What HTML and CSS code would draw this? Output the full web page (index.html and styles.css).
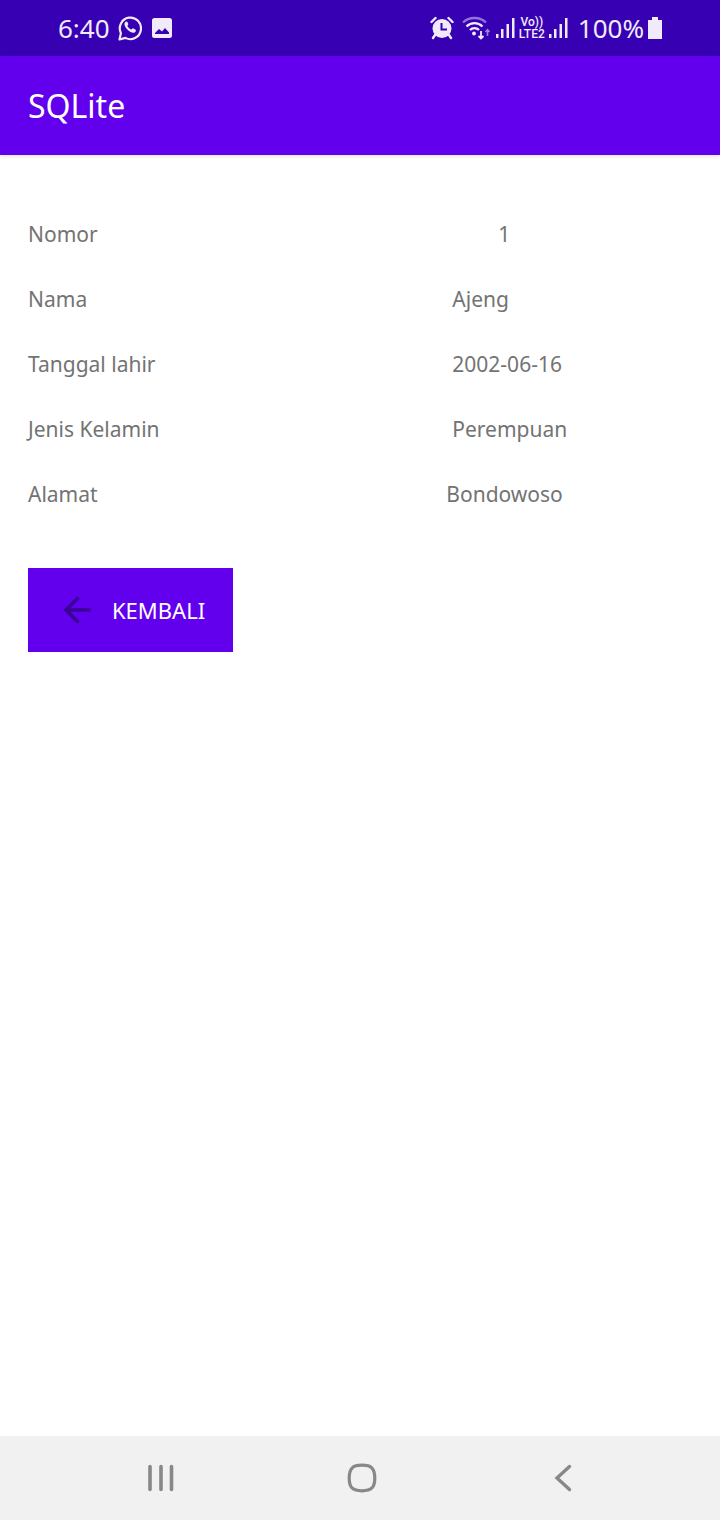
FILE: index.html
```html
<!DOCTYPE html>
<html lang="id">
<head>
<meta charset="utf-8">
<meta name="viewport" content="width=device-width, initial-scale=1">
<title>SQLite</title>
<link rel="stylesheet" href="styles.css">
</head>
<body>
<div class="screen">
  <div class="status">
    <div class="status-group">
      <span class="clock">6:40</span>
      <svg width="24" height="26" viewBox="0 0 24 26" fill="none" stroke="#f1eafb" stroke-width="2.200"><path d="M1.500 24.500l1.400-6.300A10.600 10.800 0 1 1 7.400 22.900z" stroke-linejoin="round"/><path d="M7.600 6.700c-2.200 1.600-1 5 2 8s6.600 4.200 8 1.800c.6-1.100.3-1.600-.6-2.200l-2-1c-.8-.3-1.200 1.500-2 1.200-1.700-.7-2.900-1.900-3.600-3.400-.3-.8 1.200-1.300.9-2.200L9.400 7c-.4-.7-1.200-.8-1.800-.3z" fill="#f1eafb" stroke="none"/></svg>
      <svg width="20" height="20" viewBox="0 0 20 20"><path fill="#f1eafb" fill-rule="evenodd" d="M2.500 0h15A2.500 2.500 0 0 1 20 2.500v15a2.500 2.500 0 0 1-2.500 2.500h-15A2.500 2.500 0 0 1 0 17.500v-15A2.500 2.500 0 0 1 2.500 0zM3 16h14v-1.500L13 10l-3 3.500-3-2.500-4 4z"/></svg>
    </div>
    <div class="status-group">
      <svg class="alarm" width="24" height="24" viewBox="0 0 24 24"><circle cx="12" cy="12.500" r="9.500" fill="#f1eafb"/><path d="M5 19l-2 3M19 19l2 3M1.500 6l4-4M22.500 6l-4-4" stroke="#f1eafb" stroke-width="2.400" stroke-linecap="round"/><path d="M11.500 7v6.500H17" fill="none" stroke="#3700b3" stroke-width="2"/></svg>
      <svg class="wifi" width="28" height="24" viewBox="0 0 28 24" fill="none" stroke="#f1eafb" stroke-width="2.300"><path d="M1 6.500c6-6 17-6 23 0" opacity=".5"/><path d="M4.500 10.500c4.500-4.500 11.500-4.500 16 0M8 14c2.500-2.500 6.500-2.500 9 0"/><circle cx="12" cy="17.500" r="1.900" fill="#f1eafb" stroke="none"/><path d="M19 15v7.500M16.500 20l2.500 2.500 2.500-2.500" stroke-width="1.800"/><path d="M25.500 20v-6.500M23.500 16l2-2.300 2 2.300" stroke-width="1.600" opacity=".55"/></svg>
      <svg class="signal" width="19" height="22" viewBox="0 0 19 22" fill="#f1eafb"><path d="M0 17h2.500v4H0zM5 12h2.500v9H5zM10.500 7H13v14h-2.500zM16 1h2.500v20H16z"/></svg>
      <span class="lte"><span>Vo))</span><span>LTE2</span></span>
      <svg class="signal" width="19" height="22" viewBox="0 0 19 22" fill="#f1eafb"><path d="M0 17h2.500v4H0zM5 12h2.500v9H5zM10.500 7H13v14h-2.500zM16 1h2.500v20H16z"/></svg>
      <span class="percent">100%</span>
      <svg width="14" height="22" viewBox="0 0 14 22" fill="#f1eafb"><path d="M4 0h6v3h4v19H0V3h4z"/></svg>
    </div>
  </div>
  <header class="appbar"><h1>SQLite</h1></header>
  <main class="content">
    <table class="details">
      <tr><th scope="row">Nomor</th><td class="number">1</td></tr>
      <tr><th scope="row">Nama</th><td>Ajeng</td></tr>
      <tr><th scope="row">Tanggal lahir</th><td>2002-06-16</td></tr>
      <tr><th scope="row">Jenis Kelamin</th><td>Perempuan</td></tr>
      <tr><th scope="row">Alamat</th><td class="address">Bondowoso</td></tr>
    </table>
    <button class="back" type="button">
      <svg width="28" height="28" viewBox="0 0 28 28" fill="none" stroke="#3a0096" stroke-width="3.500"><path d="M27.500 14H3M15.500 1.500L3 14l12.500 12.500"/></svg>
      KEMBALI
    </button>
  </main>
  <nav class="navbar">
    <button type="button" aria-label="Recents"><svg width="28" height="28" viewBox="0 0 28 28" stroke="#888" stroke-width="3.600" stroke-linecap="round"><path d="M3 2.500v23M14 2.500v23M24.500 2.500v23"/></svg></button>
    <button type="button" aria-label="Home"><svg width="30" height="30" viewBox="0 0 30 30" fill="none" stroke="#888" stroke-width="3.200"><path d="M15 2.200c9.500 0 12.800 3.300 12.800 12.800S24.500 27.800 15 27.800 2.200 24.500 2.200 15 5.500 2.200 15 2.200z"/></svg></button>
    <button type="button" aria-label="Back"><svg width="18" height="28" viewBox="0 0 18 28" fill="none" stroke="#888" stroke-width="3.400" stroke-linecap="round"><path d="M15.500 2.500L3 14l12.500 11.500"/></svg></button>
  </nav>
</div>
</body>
</html>
```
FILE: styles.css
```css
* { box-sizing: border-box; }
body {
  margin: 0;
  background: #fff;
  color: #737373;
  font-family: "Noto Sans", "Open Sans", sans-serif;
  font-size: 22px;
}
svg { display: block; flex: none; }
button { border: 0; font: inherit; }
.screen { display: flex; flex-direction: column; min-height: 100vh; }
.status {
  display: flex;
  justify-content: space-between;
  align-items: center;
  height: 56px;
  padding: 0 58px;
  background: #3700b3;
  color: #f1eafb;
  font-size: 26px;
}
.status-group { display: flex; align-items: center; gap: 10px; }
.clock, .alarm { margin-right: -2px; }
.wifi { margin-right: -4px; }
.signal { margin-right: -6px; }
.lte {
  display: flex;
  flex-direction: column;
  align-items: center;
  margin-right: -6px;
  font-family: Roboto, sans-serif;
  font-size: 12px;
  font-weight: 500;
  line-height: 12px;
}
.percent { margin: 0 -6px 0 6px; }
.appbar {
  display: flex;
  align-items: center;
  height: 99px;
  padding: 0 28px;
  background: #6200ee;
  color: #fff;
  box-shadow: 0 1px 4px rgba(0, 0, 0, 0.15);
}
.appbar h1 { margin: 0; font-size: 32px; font-weight: 400; }
.content { flex: 1; padding: 46px 28px; }
.details {
  width: 100%;
  border-collapse: collapse;
  table-layout: fixed;
  font-size: 21px;
}
.details th, .details td {
  height: 65px;
  padding: 0;
  font-weight: 400;
  text-align: left;
}
.details th { width: 63%; }
.details td { padding-left: 6px; }
.details .number { padding-left: 52px; }
.details .address { padding-left: 0; }
.back {
  display: flex;
  align-items: center;
  gap: 21px;
  height: 84px;
  margin-top: 42px;
  padding: 0 28px 0 35px;
  background: #6200ee;
  color: #fff;
}
.navbar {
  display: grid;
  grid-template-columns: repeat(3, 1fr);
  height: 84px;
  padding: 0 56px 0 60px;
  background: #f1f1f1;
}
.navbar button {
  display: flex;
  align-items: center;
  justify-content: center;
  background: transparent;
}
```
